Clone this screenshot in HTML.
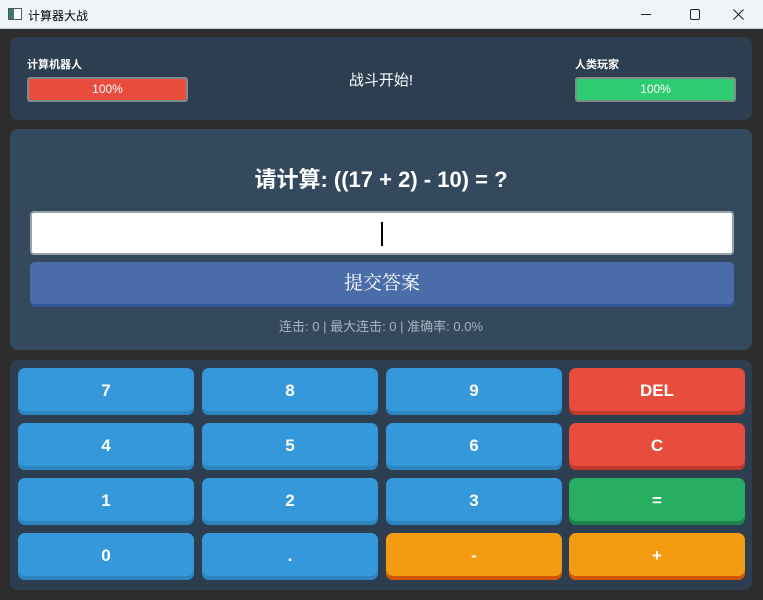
<!DOCTYPE html>
<html><head><meta charset="utf-8"><style>
*{margin:0;padding:0;box-sizing:border-box}
body{width:763px;height:600px;background:#2d2d2d;font-family:"Liberation Sans","Noto Sans CJK SC",sans-serif;position:relative;overflow:hidden;color:#fff}
.tb{position:absolute;left:0;top:0;width:763px;height:29px;background:#eff4f9;border-bottom:1px solid #ccc;color:#000;font-size:12px}
.tb .t{position:absolute;left:28px;top:7px}
.tb .ic{position:absolute;left:8px;top:8px;width:14px;height:12px;border:1px solid #555;background:linear-gradient(90deg,#3c7a70 0 5px,#fff 5px)}
.p{position:absolute;left:10px;width:742px;border-radius:8px}
.lbl{position:absolute;font-size:11px;font-weight:bold}
.bar{position:absolute;top:40px;width:161px;height:25px;border:2px solid #7f8c8d;border-radius:3px;font-size:12px;text-align:center;line-height:21px}
.b{position:absolute;width:176px;height:47px;border-radius:7px;font-weight:bold;font-size:17px;text-align:center;line-height:46px;color:#fff}
.bl{background:#3498db;box-shadow:inset 0 -4px 0 #2e86c1}
.rd{background:#e74c3c;box-shadow:inset 0 -4px 0 #c0392b}
.gr{background:#27ae60;box-shadow:inset 0 -4px 0 #1e8449}
.or{background:#f39c12;box-shadow:inset 0 -4px 0 #d35400}
</style></head><body>
<div class="tb"><div class="ic"></div><div class="t">计算器大战</div>
<div style="position:absolute;left:641px;top:14px;width:10px;height:1px;background:#222"></div>
<div style="position:absolute;left:690px;top:9px;width:10px;height:11px;border:1px solid #222;border-radius:2px"></div>
<svg style="position:absolute;left:733px;top:9px" width="11" height="11"><path d="M0.5 0.5L10.5 10.5M10.5 0.5L0.5 10.5" stroke="#222" stroke-width="1.1"/></svg></div>

<div class="p" style="top:37px;height:83px;background:#2c3e50">
<div class="lbl" style="left:17px;top:19px">计算机器人</div>
<div class="bar" style="left:17px;background:#e74c3c">100%</div>
<div style="position:absolute;left:0;width:742px;top:32px;text-align:center;font-size:15px">战斗开始!</div>
<div class="lbl" style="left:565px;top:19px">人类玩家</div>
<div class="bar" style="left:565px;background:#2ecc71">100%</div>
</div>

<div class="p" style="top:129px;height:221px;background:#34495e">
<div style="position:absolute;left:0;width:742px;top:33px;text-align:center;font-size:22px;font-weight:bold">请计算: ((17 + 2) - 10) = ?</div>
<div style="position:absolute;left:20px;top:82px;width:704px;height:44px;background:#fff;border:2px solid #95a5a6;border-radius:4px"><div style="position:absolute;left:349px;top:9px;width:1.5px;height:24px;background:#000"></div></div>
<div style="position:absolute;left:20px;top:133px;width:704px;height:45px;background:#4a6ca8;border-radius:5px;box-shadow:inset 0 -3px 0 #2f5596;text-align:center;line-height:43px;font-size:19px;font-family:'Liberation Serif','Noto Serif CJK SC',serif">提交答案</div>
<div style="position:absolute;left:0;width:742px;top:187px;text-align:center;font-size:13px;color:#a7b3bf">连击: 0 | 最大连击: 0 | 准确率: 0.0%</div>
</div>

<div class="p" style="top:360px;height:230px;background:#2c3e50"></div>
<div class="b bl" style="left:18px;top:368px">7</div><div class="b bl" style="left:202px;top:368px">8</div><div class="b bl" style="left:386px;top:368px">9</div><div class="b rd" style="left:569px;top:368px">DEL</div>
<div class="b bl" style="left:18px;top:423px">4</div><div class="b bl" style="left:202px;top:423px">5</div><div class="b bl" style="left:386px;top:423px">6</div><div class="b rd" style="left:569px;top:423px">C</div>
<div class="b bl" style="left:18px;top:478px">1</div><div class="b bl" style="left:202px;top:478px">2</div><div class="b bl" style="left:386px;top:478px">3</div><div class="b gr" style="left:569px;top:478px">=</div>
<div class="b bl" style="left:18px;top:533px">0</div><div class="b bl" style="left:202px;top:533px">.</div><div class="b or" style="left:386px;top:533px">-</div><div class="b or" style="left:569px;top:533px">+</div>
</body></html>
